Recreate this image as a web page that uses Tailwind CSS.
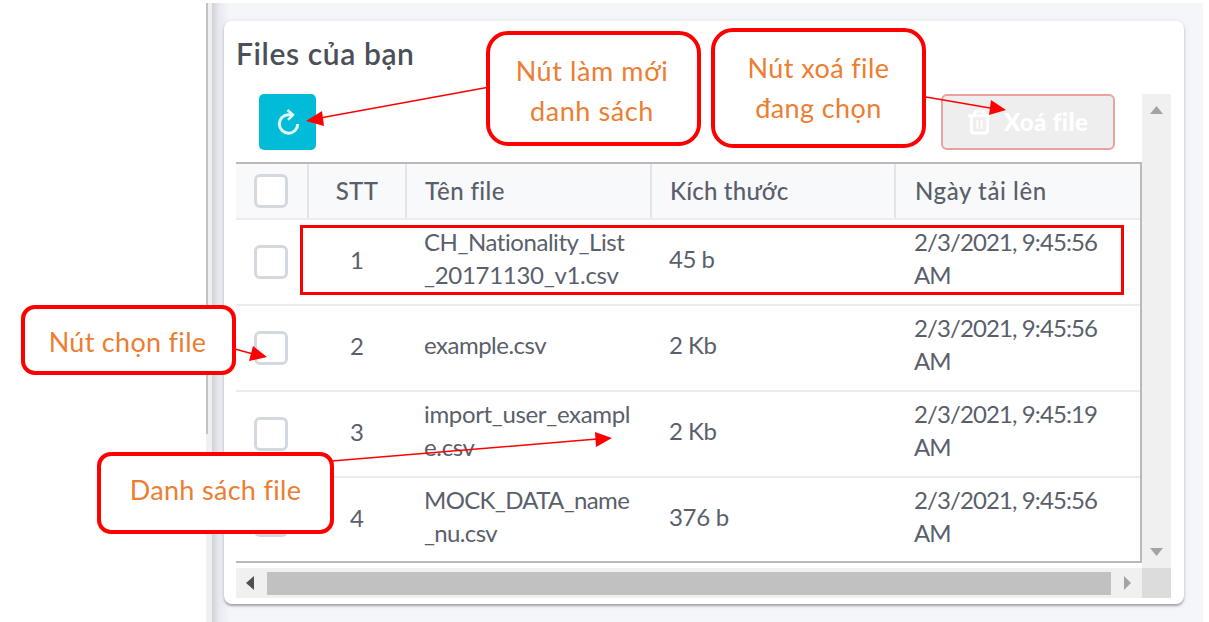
<!DOCTYPE html>
<html lang="vi">
<head>
<meta charset="utf-8">
<title>Files của bạn</title>
<script src="https://cdn.jsdelivr.net/npm/@tailwindcss/browser@4"></script>
</head>
<body class="relative h-[622px] w-[1209px] overflow-hidden bg-white font-['Lato','Noto_Sans',sans-serif] text-[#5a5f6b]">
<div class="flex h-full pt-[3px]">
  <div class="w-[206px] shrink-0"></div>
  <div class="w-[6px] shrink-0 bg-[#f0f0f0]"><div class="h-[431px] w-[2px] bg-[#c3c3c3]"></div></div>
  <main class="w-[991px] shrink-0 bg-linear-to-r from-[#cfd1d7] via-[#e9eaf0] via-[7px] to-[#f5f6fa] to-[18px] pt-[18px] pl-3">
    <section class="h-[583px] w-[960px] rounded-[8px] bg-white pt-[11px] pl-3 shadow-[0_2px_2px_#a9a9ab,0_1px_6px_#00000018]">
      <h1 class="h-[62px] text-[30px] leading-[43px] font-semibold tracking-[0.6px] text-[#4b4f58]">Files của bạn</h1>
      <div class="flex h-[474px]">
        <div class="w-[906px]">
          <div class="flex h-[68px] items-start justify-between pr-[27px] pl-[23px]">
            <button class="flex h-[56px] w-[57px] items-center justify-center rounded-[5px] bg-[#00bcd8]">
              <svg class="size-[26px]" viewBox="0 0 26 26" fill="none" stroke="#e4f9fc" stroke-width="3"><path d="M16 5.800H13A9.200 9.200 0 1 0 22.700 15"/><path d="M12.500 1l5.500 4.800-5 5" stroke-width="2.500"/></svg>
            </button>
            <button class="flex h-[56px] w-[174px] items-center rounded-[6px] border-2 border-[#eda0a0] bg-[#eee] pl-[25px] text-[24px] font-black tracking-[0.4px] text-white">
              <svg class="mr-[13px] h-[26px] w-[23px]" viewBox="0 0 24 26" fill="none" stroke="#fff" stroke-width="3"><path d="M0 6.500h24M3.500 6.500v15q0 3 3 3h11q3 0 3-3v-15M7 6V4q0-2.500 2.500-2.500h5Q17 1.500 17 4v2"/><path d="M9.800 11v9M14.200 11v9" stroke-width="2"/></svg>
              <span>Xoá file</span>
            </button>
          </div>
          <div class="h-[401px] border-t-2 border-r-2 border-b-2 border-[#b9b9b9] text-[24px] leading-[33px]">
            <div class="grid h-[56px] grid-cols-[73px_98px_245px_244px_1fr] items-stretch border-b-2 border-[#ebedf0] bg-[#f8f9fb] font-medium tracking-[0.4px]">
              <div class="flex items-center border-r-2 border-[#e2e4e7] pl-[18px]"><i class="size-[34px] rounded-[6px] border-3 border-[#d3d9df] bg-white"></i></div>
              <div class="flex items-center justify-center border-r-2 border-[#e2e4e7] pb-[2px]">STT</div>
              <div class="flex items-center border-r-2 border-[#e2e4e7] pb-[2px] pl-[18px]">Tên file</div>
              <div class="flex items-center border-r-2 border-[#e2e4e7] pb-[2px] pl-[18px] tracking-[0.2px]">Kích thước</div>
              <div class="flex items-center pb-[2px] pl-[19px] tracking-[0.6px]">Ngày tải lên</div>
            </div>
            <div class="grid h-[86px] grid-cols-[73px_98px_245px_244px_1fr] items-center border-b-2 border-[#e9edf1]">
              <div class="pl-[18px]"><i class="block size-[34px] rounded-[6px] border-3 border-[#d3d9df]"></i></div><div class="pr-[2px] pb-[6px] text-center">1</div>
              <div class="pb-[8px] pl-[17px]"><span class="tracking-[-0.45px]">CH_Nationality_List</span><br><span class="tracking-[-0.3px]">_20171130_v1.csv</span></div><div class="pb-[8px] pl-[17px] tracking-[-0.5px]">45 b</div><div class="pb-[8px] pl-[18px] tracking-[-0.9px]">2/3/2021, 9:45:56<br>AM</div>
            </div>
            <div class="grid h-[86px] grid-cols-[73px_98px_245px_244px_1fr] items-center border-b-2 border-[#e9edf1]">
              <div class="pl-[18px]"><i class="block size-[34px] rounded-[6px] border-3 border-[#d3d9df]"></i></div><div class="pr-[2px] pb-[6px] text-center">2</div>
              <div class="pb-[8px] pl-[17px] tracking-[-0.5px]">example.csv</div><div class="pb-[8px] pl-[17px] tracking-[-0.5px]">2 Kb</div><div class="pb-[8px] pl-[18px] tracking-[-0.9px]">2/3/2021, 9:45:56<br>AM</div>
            </div>
            <div class="grid h-[86px] grid-cols-[73px_98px_245px_244px_1fr] items-center border-b-2 border-[#e9edf1]">
              <div class="pl-[18px]"><i class="block size-[34px] rounded-[6px] border-3 border-[#d3d9df]"></i></div><div class="pr-[2px] pb-[6px] text-center">3</div>
              <div class="pb-[8px] pl-[17px] tracking-[-0.35px]">import_user_exampl<br>e.csv</div><div class="pb-[8px] pl-[17px] tracking-[-0.5px]">2 Kb</div><div class="pb-[8px] pl-[18px] tracking-[-0.9px]">2/3/2021, 9:45:19<br>AM</div>
            </div>
            <div class="grid h-[84px] grid-cols-[73px_98px_245px_244px_1fr] items-center">
              <div class="pl-[18px]"><i class="block size-[34px] rounded-[6px] border-3 border-[#d3d9df]"></i></div><div class="pr-[2px] pb-[6px] text-center">4</div>
              <div class="pb-[8px] pl-[17px] tracking-[-0.65px]">MOCK_DATA_name<br>_nu.csv</div><div class="pb-[8px] pl-[17px] tracking-[-0.3px]">376 b</div><div class="pb-[8px] pl-[18px] tracking-[-0.9px]">2/3/2021, 9:45:56<br>AM</div>
            </div>
          </div>
        </div>
        <div class="flex w-[29px] flex-col items-center justify-between bg-[#f0f0f0] pt-[12px] pb-[12px]">
          <svg class="h-[8px] w-[13px]" viewBox="0 0 13 8"><path d="M0 8L6.500 0 13 8z" fill="#a3a3a3"/></svg>
          <svg class="h-[8px] w-[13px]" viewBox="0 0 13 8"><path d="M0 0h13L6.500 8z" fill="#a3a3a3"/></svg>
        </div>
      </div>
      <div class="flex h-[30px] w-[935px]">
        <div class="flex flex-1 items-center bg-[#f0f0f0] pl-[10px]">
          <svg class="h-[14px] w-[8px]" viewBox="0 0 8 14"><path d="M8 0v14L0 7z" fill="#505050"/></svg>
          <div class="ml-[13px] h-[23px] w-[844px] bg-[#c1c1c1]"></div>
          <svg class="ml-[13px] h-[14px] w-[8px]" viewBox="0 0 8 14"><path d="M0 0l7 7-7 7z" fill="#a3a3a3"/></svg>
        </div>
        <div class="w-[29px] bg-[#dcdcdc]"></div>
      </div>
    </section>
  </main>
</div>

<!-- Annotations -->
<div class="absolute top-[225px] left-[300px] h-[70px] w-[824px] border-[3px] border-[#f00]"></div>
<svg class="absolute inset-0" width="1209" height="622" viewBox="0 0 1209 622" fill="#f00" stroke="#f00" stroke-width="1.5">
  <path d="M487 87.500L320 118M926 97l64 11M235 349l18 5M332 461L597 439"/>
  <g stroke="none"><path d="M306 121l16-10 2 15zM1006 110l-15-10-2 15zM267 357l-14-11-4 15zM612 438l-17-6 1 15z"/></g>
</svg>
<div class="absolute top-[31px] left-[486px] flex h-[115px] w-[215px] flex-col items-center justify-center rounded-[22px] border-4 border-[#f00] bg-white pt-[4px] pr-[3px] text-[27px] leading-[40px] tracking-[0.6px] text-[#ed7d31]"><span>Nút làm mới</span><span>danh sách</span></div>
<div class="absolute top-[28px] left-[711px] flex h-[120px] w-[215px] flex-col items-center justify-center rounded-[22px] border-4 border-[#f00] bg-white text-[27px] leading-[40px] tracking-[0.4px] text-[#ed7d31]"><span>Nút xoá file</span><span>đang chọn</span></div>
<div class="absolute top-[305px] left-[21px] flex h-[70px] w-[215px] items-center justify-center rounded-[14px] border-4 border-[#f00] bg-white pt-[4px] pr-[2px] text-[27px] tracking-[0.3px] text-[#ed7d31]"><span>Nút chọn file</span></div>
<div class="absolute top-[452px] left-[97px] flex h-[82px] w-[237px] items-center justify-center rounded-[14px] border-4 border-[#f00] bg-white pb-[5px] text-[27px] tracking-[0.3px] text-[#ed7d31]"><span>Danh sách file</span></div>
</body>
</html>
